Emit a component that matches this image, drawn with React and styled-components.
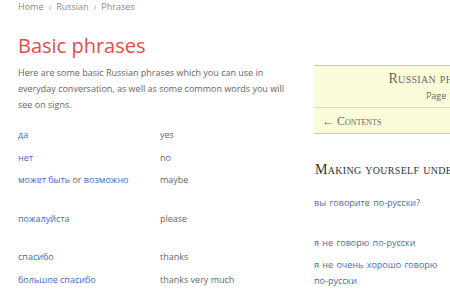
import React from "react";
import styled, { createGlobalStyle } from "styled-components";

const Global = createGlobalStyle`
  html, body { margin: 0; padding: 0; background: #fff; overflow: hidden; }
  body { font-family: "Open Sans", "Liberation Sans", sans-serif; color: #666; }
  a { text-decoration: none; }
`;

const Page = styled.div`
  display: flex;
  width: 640px;
  padding-left: 18px;
  gap: 18px;
  align-items: flex-start;
`;

const Main = styled.main`
  width: 278px;
  flex: none;
`;

const Crumbs = styled.nav`
  font-size: 9px;
  line-height: 14px;
  color: #8a8a8a;
  display: flex;
  gap: 5px;
`;

const Sep = styled.span`
  color: #999;
`;

const Title = styled.h1`
  margin: 18px 0 0;
  font-size: 20px;
  line-height: 28px;
  font-weight: 400;
  color: #e64c4c;
`;

const Intro = styled.p`
  margin: 5px 0 0;
  font-size: 9px;
  line-height: 16px;
  color: #666;
`;

const Table = styled.div`
  margin-top: 11px;
  display: flex;
  flex-direction: column;
`;

const Row = styled.div`
  display: grid;
  grid-template-columns: 142px 1fr;
  padding: 3.25px 0 ${(p) => (p.$tall ? 19.25 : 3.25)}px;
  font-size: 9px;
  line-height: 16px;
`;

const Ru = styled.span`
  color: #666;
`;

const Link = styled.a`
  color: #3e6acb;
`;

const En = styled.span`
  color: #666;
`;

const Side = styled.aside`
  width: 300px;
  flex: none;
  margin-top: 65px;
`;

const Box = styled.div`
  width: 270px;
  background: #fdfcda;
  border-top: 1px solid #c8c8c0;
  border-bottom: 1px solid #c8c8c0;
`;

const BoxHead = styled.div`
  text-align: center;
  padding: 4px 0 3px;
  border-bottom: 1px solid #d8d8cc;
`;

const BoxTitle = styled.div`
  font-family: "Liberation Serif", "DejaVu Serif", serif;
  font-variant: small-caps;
  font-size: 14px;
  line-height: 18px;
  color: #6a6660;
  letter-spacing: 0.3px;
`;

const BoxPage = styled.div`
  font-size: 9px;
  line-height: 16px;
  color: #666;
`;

const BoxNav = styled.div`
  padding: 4.5px 8px 4.5px 8px;
  font-family: "Liberation Serif", "DejaVu Serif", serif;
  font-variant: small-caps;
  font-size: 12px;
  line-height: 16px;
  color: #6a6660;
`;

const SideHeading = styled.h2`
  margin: 26px 0 0 1px;
  font-family: "Liberation Serif", "DejaVu Serif", serif;
  font-variant: small-caps;
  font-weight: 400;
  font-size: 14px;
  line-height: 20px;
  color: #333;
  letter-spacing: 0.3px;
  white-space: nowrap;
`;

const SideTable = styled.div`
  margin-top: 12px;
  display: flex;
  flex-direction: column;
`;

const SideRow = styled.div`
  display: grid;
  grid-template-columns: 142px 1fr;
  padding: 3px 0 ${(p) => (p.$tall ? 21 : 3)}px;
  font-size: 9px;
  line-height: 16px;
`;

const SideLink = styled.a`
  color: #3e6acb;
  max-width: 128px;
  word-spacing: 1px;
`;

const phrases = [
  { ru: [<Link key="a">да</Link>], en: "yes" },
  { ru: [<Link key="a">нет</Link>], en: "no" },
  {
    ru: [
      <Link key="a">может быть</Link>,
      <Ru key="b"> or </Ru>,
      <Link key="c">возможно</Link>,
    ],
    en: "maybe",
    tall: true,
  },
  { ru: [<Link key="a">пожалуйста</Link>], en: "please", tall: true },
  { ru: [<Link key="a">спасибо</Link>], en: "thanks" },
  { ru: [<Link key="a">большое спасибо</Link>], en: "thanks very much" },
];

const sidePhrases = [
  { ru: "вы говорите по-русски?", en: "do you speak Russian?", tall: true },
  { ru: "я не говорю по-русски", en: "I don't speak Russian" },
  { ru: "я не очень хорошо говорю по-русски", en: "I don't speak much Russian" },
];

export default function App() {
  return (
    <>
      <Global />
      <Page>
        <Main>
          <Crumbs>
            <span>Home</span>
            <Sep>›</Sep>
            <span>Russian</span>
            <Sep>›</Sep>
            <span>Phrases</span>
          </Crumbs>
          <Title>Basic phrases</Title>
          <Intro>
            Here are some basic Russian phrases which you can use in everyday
            conversation, as well as some common words you will see on signs.
          </Intro>
          <Table>
            {phrases.map((p, i) => (
              <Row key={i} $tall={p.tall}>
                <Ru>{p.ru}</Ru>
                <En>{p.en}</En>
              </Row>
            ))}
          </Table>
        </Main>
        <Side>
          <Box>
            <BoxHead>
              <BoxTitle>Russian phrasebook</BoxTitle>
              <BoxPage>Page 1 of 3</BoxPage>
            </BoxHead>
            <BoxNav>← Contents</BoxNav>
          </Box>
          <SideHeading>Making yourself understood</SideHeading>
          <SideTable>
            {sidePhrases.map((p, i) => (
              <SideRow key={i} $tall={p.tall}>
                <SideLink>{p.ru}</SideLink>
                <En>{p.en}</En>
              </SideRow>
            ))}
          </SideTable>
        </Side>
      </Page>
    </>
  );
}
